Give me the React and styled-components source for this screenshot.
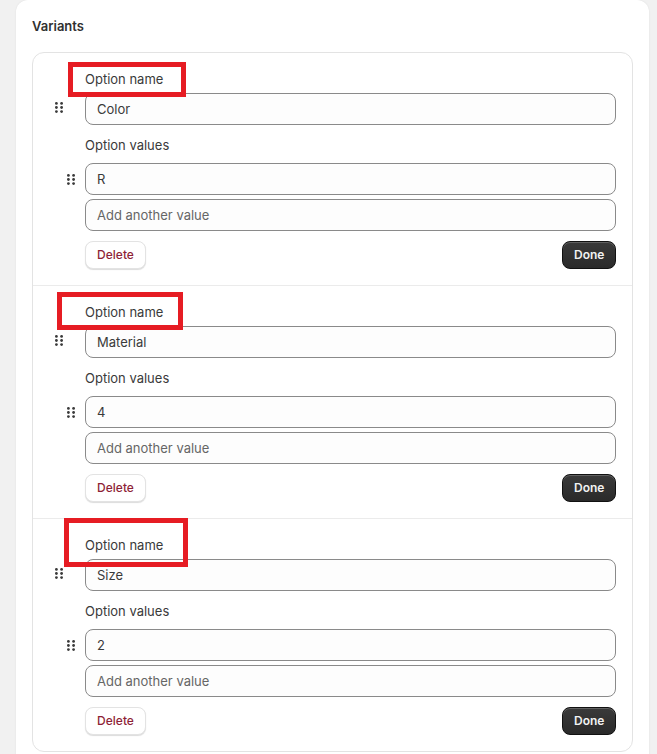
import styled, { createGlobalStyle } from 'styled-components';

const GlobalStyle = createGlobalStyle`
  html, body {
    margin: 0;
    height: 100%;
    overflow: hidden;
    background: #f1f1f1;
  }
  * { box-sizing: border-box; }
  #root {
    height: 754px;
    overflow: hidden;
    font-family: Inter, "Liberation Sans", sans-serif;
    font-size: 13px;
    color: #303030;
  }
`;

const Card = styled.div`
  width: 633px;
  margin-left: 16px;
  padding: 16px;
  background: #fff;
  border-radius: 12px;
  box-shadow: 0 0 2px rgba(0, 0, 0, 0.08);
`;
const CardTitle = styled.h2`
  margin: 0 0 16px;
  font-size: 13px;
  line-height: 20px;
  font-weight: 600;
`;
const OptionList = styled.div`
  border: 1px solid #e3e3e3;
  border-radius: 12px;
`;
const OptionSection = styled.section`
  position: relative;
  height: ${(p) => p.$height}px;
  padding: 16px 16px 0 19px;
  border-bottom: ${(p) => (p.$last ? 'none' : '1px solid #ebebeb')};
`;
const FieldLabel = styled.div`
  margin: ${(p) => p.$top}px 0 4px 33px;
  line-height: 20px;
  color: #3a3a3a;
`;
const ValueLabel = styled(FieldLabel)`
  margin-bottom: 8px;
`;
const FieldRow = styled.div`
  display: grid;
  grid-template-columns: 33px 1fr;
  align-items: center;
  margin-bottom: 4px;
`;
const Handle = styled.svg`
  display: block;
  width: 8px;
  height: 11px;
  margin-left: ${(p) => p.$inset}px;
  margin-top: ${(p) => p.$shift}px;
  fill: #3a3a3a;
`;
const Input = styled.input`
  grid-column: 2;
  width: 100%;
  height: 32px;
  padding: 0 11px;
  border: 1px solid #8a8a8a;
  border-radius: 8px;
  background: #fdfdfd;
  font: inherit;
  color: #3a3a3a;
  outline: none;
  &::placeholder {
    color: #666;
    opacity: 1;
  }
`;
const Actions = styled.div`
  display: flex;
  justify-content: space-between;
  margin: 10px 0 0 33px;
`;
const Button = styled.button`
  height: 28px;
  padding: 0 11px 2px;
  border-radius: 8px;
  font: inherit;
  font-size: 12px;
  font-weight: 550;
`;
const DeleteButton = styled(Button)`
  width: 61px;
  border: 1px solid #e3e3e3;
  background: #fff;
  color: #8e1f37;
  box-shadow: 0 1px 1px rgba(0, 0, 0, 0.14);
`;
const DoneButton = styled(Button)`
  width: 54px;
  border: 1px solid #111;
  background: linear-gradient(#3a3a3a, #2a2a2a);
  color: #f2f2f2;
  font-weight: 600;
  box-shadow: inset 0 1px 0 rgba(255, 255, 255, 0.2);
`;
const Annotation = styled.div`
  position: absolute;
  left: ${(p) => p.$left}px;
  top: ${(p) => p.$top}px;
  width: ${(p) => p.$width}px;
  height: ${(p) => p.$height}px;
  border: 5px solid #e61c23;
  pointer-events: none;
`;

const DragHandle = ({ inset, shift }) => (
  <Handle viewBox="0 0 8 11" $inset={inset} $shift={shift}>
    <circle cx="1.4" cy="1.4" r="1.4" />
    <circle cx="6.6" cy="1.4" r="1.4" />
    <circle cx="1.4" cy="5.5" r="1.4" />
    <circle cx="6.6" cy="5.5" r="1.4" />
    <circle cx="1.4" cy="9.6" r="1.4" />
    <circle cx="6.6" cy="9.6" r="1.4" />
  </Handle>
);

const options = [
  { name: 'Color', value: 'R', height: 233, box: { left: 35, top: 9, width: 118, height: 35 } },
  { name: 'Material', value: '4', height: 233, box: { left: 24, top: 6, width: 126, height: 38 } },
  { name: 'Size', value: '2', height: 232, box: { left: 31, top: -1, width: 124, height: 49 }, last: true },
];

const App = () => {
  return (
    <>
      <GlobalStyle />
      <Card>
        <CardTitle>Variants</CardTitle>
        <OptionList>
          {options.map((o) => (
            <OptionSection key={o.name} $height={o.height} $last={o.last}>
              <FieldLabel $top={0}>Option name</FieldLabel>
              <FieldRow>
                <DragHandle inset={3} shift={-4} />
                <Input defaultValue={o.name} />
              </FieldRow>
              <ValueLabel $top={10}>Option values</ValueLabel>
              <FieldRow>
                <DragHandle inset={15} shift={0} />
                <Input defaultValue={o.value} />
              </FieldRow>
              <FieldRow>
                <Input placeholder="Add another value" />
              </FieldRow>
              <Actions>
                <DeleteButton>Delete</DeleteButton>
                <DoneButton>Done</DoneButton>
              </Actions>
              <Annotation
                $left={o.box.left}
                $top={o.box.top}
                $width={o.box.width}
                $height={o.box.height}
              />
            </OptionSection>
          ))}
        </OptionList>
      </Card>
    </>
  );
};

export default App;
